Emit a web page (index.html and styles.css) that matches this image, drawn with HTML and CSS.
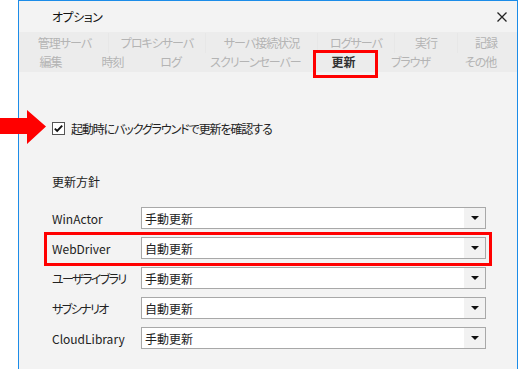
FILE: index.html
```html
<!DOCTYPE html>
<html lang="ja">
<head>
	<meta charset="UTF-8">
	<title>オプション</title>
	<link rel="stylesheet" href="styles.css">
</head>
<body>

	<div class="window">
		<div class="titlebar">
			<span class="title">オプション</span>
			<svg class="close" width="10" height="10" viewBox="0 0 10 10">
				<path d="M0.5 0.5 L9.5 9.5 M9.5 0.5 L0.5 9.5" stroke="#222" stroke-width="1.3" fill="none"/>
			</svg>
		</div>

		<div class="tabs">
			<ul class="tab-row row1">
				<li>管理サーバ</li>
				<li>プロキシサーバ</li>
				<li>サーバ接続状況</li>
				<li>ログサーバ</li>
				<li>実行</li>
				<li>記録</li>
			</ul>
			<ul class="tab-row row2">
				<li>編集</li>
				<li>時刻</li>
				<li>ログ</li>
				<li>スクリーンセーバー</li>
				<li class="active">更新</li>
				<li>ブラウザ</li>
				<li>その他</li>
			</ul>
		</div>

		<div class="content">
			<label class="check">
				<svg class="checkbox" width="13" height="13" viewBox="0 0 13 13">
					<rect x="0.5" y="0.5" width="12" height="12" fill="#fff" stroke="#555"/>
					<path d="M2.8 6.6 L5.2 9 L10.2 3.6" stroke="#111" stroke-width="1.9" fill="none"/>
				</svg>
				<span>起動時にバックグラウンドで更新を確認する</span>
			</label>

			<h3 class="section">更新方針</h3>

			<div class="policy">
				<div class="row">
					<span class="label">WinActor</span>
					<div class="select"><span>手動更新</span><i class="drop"></i></div>
				</div>
				<div class="row marked">
					<span class="label">WebDriver</span>
					<div class="select"><span>自動更新</span><i class="drop"></i></div>
				</div>
				<div class="row">
					<span class="label ja">ユーザライブラリ</span>
					<div class="select"><span>手動更新</span><i class="drop"></i></div>
				</div>
				<div class="row">
					<span class="label ja">サブシナリオ</span>
					<div class="select"><span>自動更新</span><i class="drop"></i></div>
				</div>
				<div class="row">
					<span class="label">CloudLibrary</span>
					<div class="select"><span>手動更新</span><i class="drop"></i></div>
				</div>
			</div>
		</div>
	</div>

	<div class="tab-mark"></div>
	<svg class="arrow" width="46" height="36" viewBox="0 0 46 36">
		<polygon points="0,8 27,8 27,0 46,16.5 27,34 27,24 0,24" fill="#ff0000"/>
	</svg>

</body>
</html>
```

FILE: styles.css
```css
html, body{
	margin:0;
	padding:0;
	background:#fff;
	overflow:hidden;
}
body{
	width:518px;
	height:369px;
	position:relative;
	font-family:"Noto Sans CJK JP", "Noto Sans", sans-serif;
	font-size:12px;
	color:#222;
	font-feature-settings:"palt";
}
.window{
	margin-left:18px;
	width:498px;
	height:368px;
	border:1px solid #1c8ce8;
	border-bottom:none;
	background:#f3f3f3;
}
.titlebar{
	height:31px;
	display:flex;
	align-items:center;
	justify-content:space-between;
	padding:0 10px 0 33px;
	background:#f3f3f3;
}
.title{
	font-size:12px;
	color:#111;
	margin-top:-1px;
	letter-spacing:-0.5px;
}
.close{
	margin-top:1px;
}
.tabs{
	height:40px;
	background:#ececec;
}
.tab-row{
	list-style:none;
	margin:0;
	padding:0 0 0 2px;
	display:grid;
	height:20px;
}
.tab-row li{
	text-align:center;
	line-height:20px;
	color:#b4b4b4;
	white-space:nowrap;
	letter-spacing:-1px;
}
.row1{
	grid-template-columns:87px 97px 112px 77px 63px 57px;
	padding-top:1px;
	height:19px;
}
.row1 li + li{
	border-left:1px solid #e7e7e7;
}
.row2{
	grid-template-columns:59px 65px 51px 119px 57px 77px 63px;
}
.tab-row li.active{
	color:#333;
	font-weight:bold;
	letter-spacing:0;
}
.content{
	padding:48px 0 0 33px;
}
.check{
	display:flex;
	align-items:center;
	height:16px;
}
.check span{
	letter-spacing:-1.1px;
}
.checkbox{
	margin-right:6px;
}
.section{
	margin:38px 0 0;
	font-size:12px;
	font-weight:normal;
	line-height:16px;
}
.policy{
	margin-top:17px;
	display:flex;
	flex-direction:column;
	gap:8px;
}
.row{
	display:flex;
	align-items:center;
	height:22px;
	position:relative;
}
.label{
	width:89px;
}
.label.ja{
	letter-spacing:-1.6px;
}
.select{
	width:343px;
	height:20px;
	border:1px solid #a8a8a8;
	background:#fff;
	display:flex;
	align-items:center;
	justify-content:space-between;
}
.select span{
	padding-left:3px;
}
.drop{
	width:21px;
	height:100%;
	background:#f2f2f2;
	display:flex;
	align-items:center;
	justify-content:center;
}
.drop::before{
	content:"";
	border-left:4px solid transparent;
	border-right:4px solid transparent;
	border-top:4px solid #111;
}
.row.marked::after{
	content:"";
	position:absolute;
	left:-8px;
	top:-5px;
	width:442px;
	height:28px;
	border:3px solid #ff0000;
}
.tab-mark{
	position:absolute;
	left:313px;
	top:50px;
	width:59px;
	height:22px;
	border:3px solid #ff0000;
}
.arrow{
	position:absolute;
	left:0;
	top:110px;
}
```
